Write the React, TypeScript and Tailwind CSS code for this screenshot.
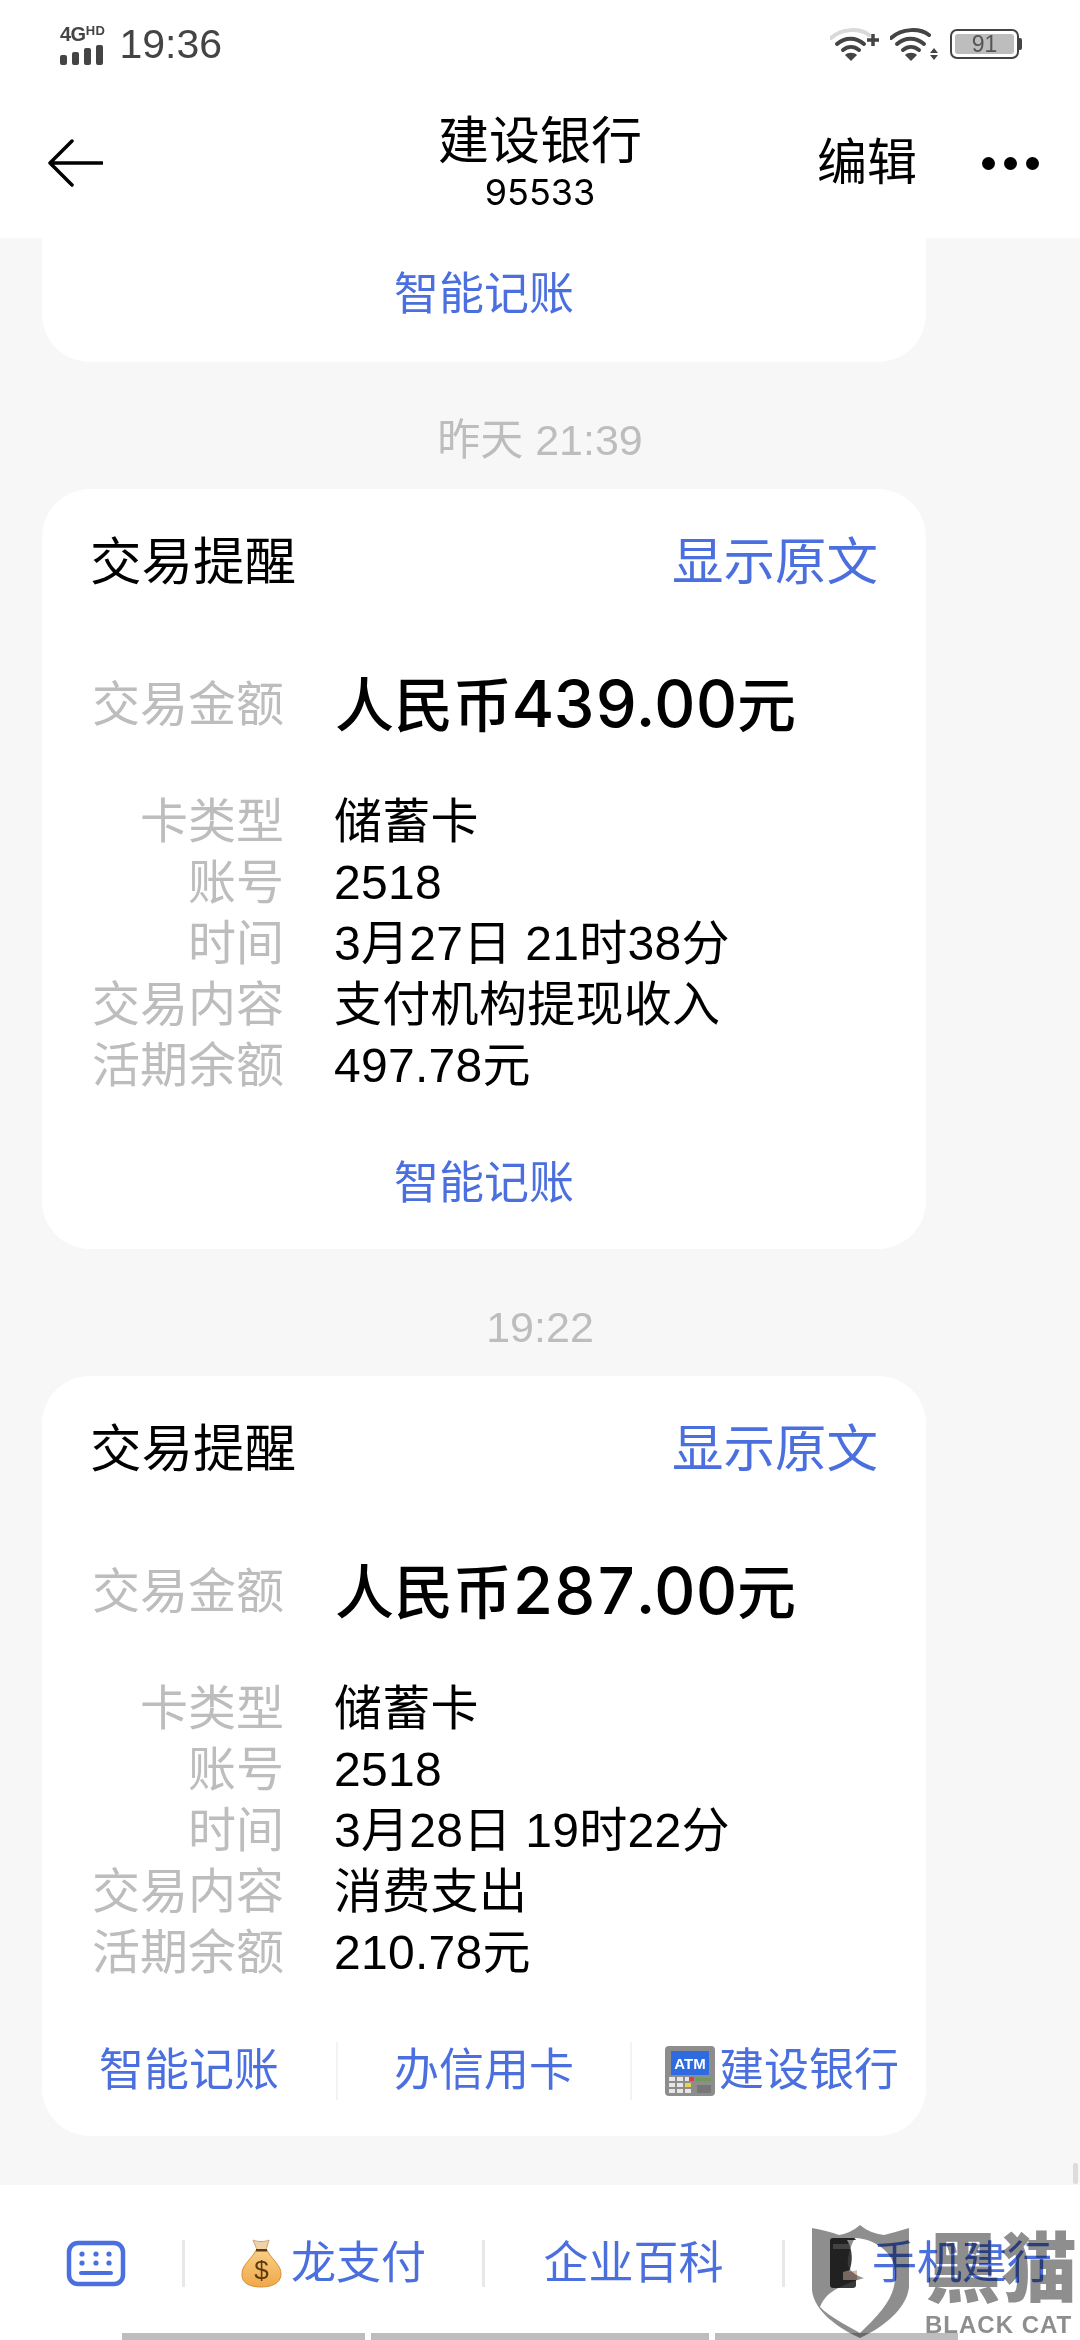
import React from "react";

type Row = { label: string; value: string };

const firstRows: Row[] = [
  { label: "卡类型", value: "储蓄卡" },
  { label: "账号", value: "2518" },
  { label: "时间", value: "3月27日 21时38分" },
  { label: "交易内容", value: "支付机构提现收入" },
  { label: "活期余额", value: "497.78元" },
];

const secondRows: Row[] = [
  { label: "卡类型", value: "储蓄卡" },
  { label: "账号", value: "2518" },
  { label: "时间", value: "3月28日 19时22分" },
  { label: "交易内容", value: "消费支出" },
  { label: "活期余额", value: "210.78元" },
];

function WifiIcon({ plus }: { plus?: boolean }) {
  return (
    <svg width="50" height="36" viewBox="0 0 50 36" fill="none">
      <path d="M1 12C12 2 30 2 39 9" stroke={plus ? "#d9d9d9" : "#444"} strokeWidth="4" strokeLinecap="round" />
      <path d="M7 18C15 11 26 11 34 18" stroke="#444" strokeWidth="4" strokeLinecap="round" />
      <path d="M13 24C18 20 24 20 29 24" stroke="#444" strokeWidth="4" strokeLinecap="round" />
      <path d="M15 29C18 26 24 26 27 29L21 35Z" fill="#444" />
      {plus ? (
        <path d="M43 8V20M37 14H49" stroke="#444" strokeWidth="3.5" />
      ) : (
        <path d="M44 22L48 27H40ZM40 29H48L44 34Z" fill="#444" />
      )}
    </svg>
  );
}

function StatusBar() {
  return (
    <div className="flex h-[88px] items-center justify-between pl-[60px] pr-[58px]">
      <div className="flex items-center gap-[14px]">
        <div className="flex flex-col gap-[1px] pt-[1px]">
          <div className="flex items-start font-bold leading-none text-[#444]">
            <span className="text-[20px] tracking-[-0.5px]">4G</span>
            <span className="text-[13px] tracking-[0.5px]">HD</span>
          </div>
          <div className="flex items-end gap-[5px]">
            <div className="h-[10px] w-[7px] rounded-[2px] bg-[#444]" />
            <div className="h-[13px] w-[7px] rounded-[2px] bg-[#444]" />
            <div className="h-[17px] w-[7px] rounded-[2px] bg-[#444]" />
            <div className="h-[20px] w-[7px] rounded-[2px] bg-[#444]" />
          </div>
        </div>
        <span className="text-[41px] leading-none text-[#444]">19:36</span>
      </div>
      <div className="flex items-center gap-[10px]">
        <WifiIcon plus />
        <WifiIcon />
        <div className="flex items-center">
          <div className="flex h-[30px] w-[69px] items-center rounded-[7px] border-[2px] border-[#444] p-[3px]">
            <div className="flex h-full w-full items-center justify-center rounded-[3px] bg-[#bdbdbd] text-[23px] leading-none text-[#555]">
              91
            </div>
          </div>
          <div className="h-[12px] w-[3px] rounded-r-[2px] bg-[#444]" />
        </div>
      </div>
    </div>
  );
}

function Header() {
  return (
    <div className="grid h-[150px] grid-cols-[1fr_auto_1fr]">
      <div className="flex h-[150px] items-center pl-[47px]">
        <svg width="56" height="48" viewBox="0 0 56 48" fill="none">
          <path d="M25 2L3 24L25 46M3 24H55" stroke="#000" strokeWidth="3.5" strokeLinecap="round" strokeLinejoin="round" />
        </svg>
      </div>
      <div className="flex flex-col items-center pt-[26px] text-black">
        <div className="text-[51px] leading-[56px]">建设银行</div>
        <div className="font-['Inter',sans-serif] text-[36px] leading-[44px]">95533</div>
      </div>
      <div className="flex h-[150px] items-center justify-end pr-[41px]">
        <span className="mr-[65px] text-[50px] leading-none text-black">编辑</span>
        <div className="flex gap-[9px]">
          <div className="h-[13px] w-[13px] rounded-full bg-black" />
          <div className="h-[13px] w-[13px] rounded-full bg-black" />
          <div className="h-[13px] w-[13px] rounded-full bg-black" />
        </div>
      </div>
    </div>
  );
}

function AtmIcon() {
  return (
    <svg width="50" height="50" viewBox="0 0 50 50" className="shrink-0">
      <rect x="0" y="0" width="50" height="50" rx="4" fill="#8d8d8d" />
      <rect x="6" y="5" width="38" height="24" fill="#2e6be0" />
      <text x="25" y="23" textAnchor="middle" fontSize="15" fontWeight="700" fill="#fff" fontFamily="Liberation Sans">
        ATM
      </text>
      {[4, 12, 20].map((x) =>
        [31, 37, 43].map((y) => <rect key={`${x}-${y}`} x={x} y={y} width="6" height="4" fill={x === 20 && y === 37 ? "#e9d44a" : "#e6e6e6"} />)
      )}
      <rect x="24" y="31" width="5" height="4" fill="#d9453a" />
      <rect x="31" y="32" width="15" height="3" fill="#6f9a5b" />
      <rect x="32" y="39" width="14" height="8" fill="#777" />
    </svg>
  );
}

function Amount({ value }: { value: string }) {
  return (
    <div className="flex items-baseline text-[59px] font-medium leading-[70px] text-black">
      人民币
      <span className="font-['Inter',sans-serif] text-[65px] tabular-nums tracking-[-0.5px]">{value}</span>
      <span>元</span>
    </div>
  );
}

function Card({ amount, rows, full }: { amount: string; rows: Row[]; full?: boolean }) {
  return (
    <div className="mx-[42px] h-[760px] w-[884px] rounded-[48px] bg-white pt-[48px]">
      <div className="flex justify-between pl-[48px] pr-[48px] text-[51.5px] leading-[50px]">
        <span className="text-black">交易提醒</span>
        <span className="text-[#4b6fde]">显示原文</span>
      </div>
      <div className="mt-[83px] flex h-[70px] items-center pl-[49px]">
        <div className="w-[193px] whitespace-nowrap text-right text-[48px] leading-[70px] text-[#bdbdbd]">交易金额</div>
        <div className="ml-[51px]">
          <Amount value={amount} />
        </div>
      </div>
      <div className="mt-[51px] flex flex-col pl-[49px]">
        {rows.map((row) => (
          <div key={row.label} className="flex h-[61px] items-center text-[48px] leading-[61px]">
            <div className="w-[193px] whitespace-nowrap text-right text-[#bdbdbd]">{row.label}</div>
            <div className="ml-[50px] tracking-[0.3px] text-black">{row.value}</div>
          </div>
        ))}
      </div>
      {full ? (
        <div className="mt-[59px] grid h-[58px] grid-cols-[294px_296px_294px] items-center text-[45px] leading-[58px] text-[#4b6fde]">
          <div className="text-center">智能记账</div>
          <div className="border-l-[2px] border-r-[2px] border-[#f3f3f3] text-center">办信用卡</div>
          <div className="flex items-center justify-center gap-[4px] pl-[6px]">
            <AtmIcon />
            <span>建设银行</span>
          </div>
        </div>
      ) : (
        <div className="mt-[59px] text-center text-[45px] leading-[58px] text-[#4b6fde]">智能记账</div>
      )}
    </div>
  );
}

function TimeLabel({ text }: { text: string }) {
  return <div className="mb-[21px] mt-[50px] text-center text-[43px] leading-[56px] text-[#bdbdbd]">{text}</div>;
}

function BottomBar() {
  return (
    <div className="h-[155px] bg-white pt-[38px]">
      <div className="grid h-[80px] grid-cols-[182px_300px_300px_298px] items-center text-[45px] leading-none text-[#4b6fde]">
        <div className="flex justify-center pl-[10px]">
          <svg width="60" height="47" viewBox="0 0 60 47" fill="none">
            <rect x="3" y="3" width="54" height="41" rx="9" stroke="#4b6fde" strokeWidth="4.5" />
            <circle cx="16" cy="14" r="2.6" fill="#4b6fde" />
            <circle cx="30" cy="14" r="2.6" fill="#4b6fde" />
            <circle cx="43" cy="14" r="2.6" fill="#4b6fde" />
            <circle cx="16" cy="23" r="2.6" fill="#4b6fde" />
            <circle cx="30" cy="23" r="2.6" fill="#4b6fde" />
            <circle cx="43" cy="23" r="2.6" fill="#4b6fde" />
            <path d="M15 33H45" stroke="#4b6fde" strokeWidth="4" strokeLinecap="round" />
          </svg>
        </div>
        <div className="flex h-[47px] items-center justify-center gap-[9px] border-l-[3px] border-[#e8e8e8]">
          <svg width="41" height="50" viewBox="0 0 41 50" className="shrink-0">
            <defs>
              <linearGradient id="bag" x1="0" y1="0" x2="0" y2="1">
                <stop offset="0" stopColor="#f9cf85" />
                <stop offset="1" stopColor="#f0a84a" />
              </linearGradient>
            </defs>
            <path d="M12 2C16 4 24 4 28 2L25 12H16Z" fill="#f0d2a6" stroke="#c9a67a" strokeWidth="1" />
            <path d="M15 12H26C29 20 41 27 40 37C39 46 30 49 20 49C10 49 1 46 1 37C0 27 12 20 15 12Z" fill="url(#bag)" stroke="#d98f35" strokeWidth="1" />
            <rect x="15" y="11" width="11" height="2.5" fill="#5d3a12" />
            <text x="20.5" y="41" textAnchor="middle" fontSize="26" fill="#5d3a12" fontFamily="Liberation Sans">
              $
            </text>
          </svg>
          <span>龙支付</span>
        </div>
        <div className="flex h-[47px] items-center justify-center border-l-[3px] border-[#e8e8e8]">企业百科</div>
        <div className="flex h-[47px] items-center justify-center gap-[14px] border-l-[3px] border-[#e8e8e8] pl-[16px]">
          <svg width="29" height="50" viewBox="0 0 29 50" className="shrink-0">
            <rect x="1" y="0" width="26" height="50" rx="3" fill="#3a3a3a" />
            <rect x="4" y="6" width="19" height="5" fill="#777" />
            <path d="M14 34L28 30V42H14Z" fill="#d8b9a8" />
            <path d="M18 2H29V32L20 34C24 24 24 12 18 2Z" fill="#fff" />
          </svg>
          <span>手机建行</span>
        </div>
      </div>
      <div className="mt-[30px] flex h-[7px] gap-[6px] pl-[122px]">
        <div className="w-[243px] bg-[#bdbdbd]" />
        <div className="w-[338px] bg-[#bdbdbd]" />
        <div className="w-[243px] bg-[#bdbdbd]" />
      </div>
    </div>
  );
}

function Watermark() {
  return (
    <div className="pointer-events-none absolute bottom-0 left-[812px] flex h-[115px] w-[268px] gap-[16px] mix-blend-multiply">
      <svg width="97" height="113" viewBox="0 0 97 113" className="shrink-0">
        <path d="M0 3Q16 6 27 10Q39 8 48 0Q57 8 72 10Q84 7 97 3V62C95 84 70 103 48 113C26 103 2 86 0 65Z" fill="#8e8e8e" />
        <path d="M43 13C64 14 82 28 83 46C84 66 78 80 48 108C34 100 18 92 8 82C14 66 30 60 52 53C42 50 34 44 36 34C37 26 40 18 43 13Z" fill="#fff" />
      </svg>
      <div className="flex w-[155px] shrink-0 flex-col">
        <div className="mt-[9px] h-[72px] whitespace-nowrap text-[76px] font-black leading-[72px] text-[#8e8e8e]">黑猫</div>
        <div className="mt-[8px] whitespace-nowrap text-[24px] font-bold leading-[22px] tracking-[1px] text-[#8e8e8e]">BLACK CAT</div>
      </div>
    </div>
  );
}

export default function App() {
  return (
    <div className="relative flex h-[2340px] w-[1080px] flex-col overflow-hidden bg-[#f7f7f7] font-['Liberation_Sans','Noto_Sans_CJK_SC',sans-serif]">
      <div className="bg-white">
        <StatusBar />
        <Header />
      </div>

      <div className="h-[1947px]">
        {/* tail of the previous message */}
        <div className="ml-[42px] flex h-[124px] w-[884px] items-center justify-center rounded-b-[48px] bg-white pb-[10px] text-[45px] leading-[58px] text-[#4b6fde]">
          智能记账
        </div>
        <TimeLabel text="昨天 21:39" />
        <Card amount="439.00" rows={firstRows} />
        <TimeLabel text="19:22" />
        <Card amount="287.00" rows={secondRows} full />
      </div>

      <BottomBar />

      {/* scroll indicator */}
      <div className="absolute right-[2px] top-[2163px] h-[21px] w-[5px] rounded-full bg-[#dcdcdc]" />
      <Watermark />
    </div>
  );
}
